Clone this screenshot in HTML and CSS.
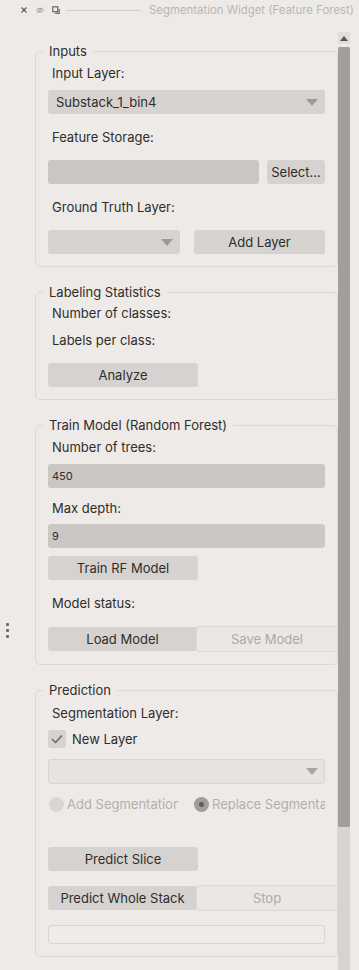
FILE: index.html
```html
<!DOCTYPE html>
<html lang="en">
<head>
    <meta charset="utf-8">
    <title>Segmentation Widget (Feature Forest)</title>
    <link rel="stylesheet" href="styles.css">
</head>
<body>
<div class="titlebar">
    <svg class="tb-icon" width="8" height="8" viewBox="0 0 8 8"><path d="M1.5 1.5 L6.5 6.5 M6.5 1.5 L1.5 6.5" stroke="#5a5856" stroke-width="1.1" fill="none"/></svg>
    <svg class="tb-icon" width="8" height="8" viewBox="0 0 8 8"><ellipse cx="4" cy="4.2" rx="3.2" ry="1.9" stroke="#a3a09d" stroke-width="1" fill="none"/><circle cx="4" cy="4.2" r="1" fill="#a3a09d"/><path d="M1.5 6.8 L6.5 1.6" stroke="#a3a09d" stroke-width="0.9"/></svg>
    <svg class="tb-icon" width="8" height="8" viewBox="0 0 8 8"><rect x="0.8" y="0.8" width="5" height="5" stroke="#5a5856" stroke-width="1.1" fill="none"/><path d="M3 7.2 H7.2 V3" stroke="#5a5856" stroke-width="1.1" fill="none"/></svg>
    <span class="tb-line"></span>
    <span class="tb-title">Segmentation Widget (Feature Forest)</span>
</div>

<div class="dock">
    <div class="gutter">
        <span class="handle"><i></i><i></i><i></i></span>
    </div>

    <div class="panel">
        <fieldset class="group first-group">
            <legend>Inputs</legend>
            <div class="body">
                <div class="lbl mt6">Input Layer:</div>
                <div class="combo mt9"><span>Substack_1_bin4</span><i class="arrow"></i></div>
                <div class="lbl mt15">Feature Storage:</div>
                <div class="row mt15 gap8">
                    <div class="edit grow"></div>
                    <button class="btn select">Select...</button>
                </div>
                <div class="lbl mt15">Ground Truth Layer:</div>
                <div class="row mt15 gap14">
                    <div class="combo gt-combo"><span></span><i class="arrow"></i></div>
                    <button class="btn grow">Add Layer</button>
                </div>
            </div>
        </fieldset>

        <fieldset class="group">
            <legend>Labeling Statistics</legend>
            <div class="body">
                <div class="lbl mt5">Number of classes:</div>
                <div class="lbl mt11">Labels per class:</div>
                <button class="btn half mt15">Analyze</button>
            </div>
        </fieldset>

        <fieldset class="group">
            <legend>Train Model (Random Forest)</legend>
            <div class="body">
                <div class="lbl mt6">Number of trees:</div>
                <div class="edit num mt9">450</div>
                <div class="lbl mt12">Max depth:</div>
                <div class="edit num mt8">9</div>
                <button class="btn half mt8">Train RF Model</button>
                <div class="lbl mt15">Model status:</div>
                <div class="row pair mt15">
                    <button class="btn left">Load Model</button>
                    <button class="btn off">Save Model</button>
                </div>
            </div>
        </fieldset>

        <fieldset class="group">
            <legend>Prediction</legend>
            <div class="body">
                <div class="lbl mt7">Segmentation Layer:</div>
                <div class="check mt9">
                    <span class="box"><svg width="18" height="18" viewBox="0 0 18 18"><path d="M4.5 9.5 L7.5 12.5 L13.5 6" stroke="#6b6866" stroke-width="1.6" fill="none" stroke-linecap="round" stroke-linejoin="round"/></svg></span>
                    <span>New Layer</span>
                </div>
                <div class="combo disabled mt11"><span></span><i class="arrow"></i></div>
                <div class="radios mt12">
                    <span class="radio first"><i class="dot"></i><span class="rtext">Add Segmentation</span></span>
                    <span class="radio on"><i class="dot"></i><span class="rtext">Replace Segmentation</span></span>
                </div>
                <button class="btn half mt35">Predict Slice</button>
                <div class="row pair mt14">
                    <button class="btn left">Predict Whole Stack</button>
                    <button class="btn off">Stop</button>
                </div>
                <div class="progress mt14"></div>
            </div>
        </fieldset>
    </div>

    <div class="scroll">
        <div class="sb-up"><i></i></div>
        <div class="sb-track"><div class="sb-thumb"></div></div>
    </div>
</div>
</body>
</html>
```

FILE: styles.css
```css
* {
    box-sizing: border-box;
}
body {
    margin: 0;
    width: 359px;
    height: 970px;
    overflow: hidden;
    background: #eeeae7;
    font-family: Inter, "Liberation Sans", sans-serif;
    font-size: 13px;
    color: #2f2d2c;
}

/* title bar */
.titlebar {
    display: flex;
    align-items: center;
    height: 20px;
    padding-left: 20px;
    overflow: hidden;
}
.tb-icon {
    display: block;
    flex: none;
    margin-right: 8px;
}
.tb-line {
    flex: none;
    width: 75px;
    height: 1px;
    margin-left: -2px;
    background: #d3cfcc;
}
.tb-title {
    flex: none;
    margin-left: 8px;
    font-size: 11.4px;
    color: #bab6b3;
    white-space: nowrap;
}

/* dock area */
.dock {
    display: flex;
    height: 950px;
}
.gutter {
    width: 35px;
    flex: none;
}
.handle {
    display: flex;
    flex-direction: column;
    gap: 3px;
    margin: 603px 0 0 6px;
}
.handle i {
    width: 3px;
    height: 3px;
    border-radius: 1px;
    background: #6e6b69;
}
.panel {
    width: 303px;
    flex: none;
    overflow: hidden;
}
.scroll {
    width: 12px;
    flex: none;
    display: flex;
    flex-direction: column;
}
.sb-up {
    height: 12px;
    margin-top: 12px;
    background: #e2dedb;
    display: flex;
    align-items: center;
    justify-content: center;
}
.sb-up i {
    width: 0;
    height: 0;
    border-left: 4px solid transparent;
    border-right: 4px solid transparent;
    border-bottom: 5px solid #595654;
}
.sb-track {
    flex: 1;
    margin-top: 3px;
    background: #d7d3d0;
}
.sb-thumb {
    height: 780px;
    border-radius: 2px;
    background: #a29e9b;
}

/* group boxes */
.group {
    margin: 17px 0 0;
    padding: 0 0 12px 7px;
    min-width: 0;
    border: 1px solid #dcd8d5;
    border-radius: 5px;
}
.first-group {
    margin-top: 23px;
}
legend {
    padding: 0 6px;
    line-height: 16px;
    color: #2f2d2c;
}
.body {
    padding: 0 12px 0 5px;
}
.lbl {
    height: 16px;
    line-height: 16px;
    padding-left: 4px;
}

.row {
    display: flex;
}
.gap8 { gap: 8px; }
.gap14 { gap: 14px; }
.grow { flex: 1 1 0; }

.combo {
    position: relative;
    height: 24px;
    line-height: 24px;
    padding-left: 8px;
    border-radius: 3px;
    background: #d6d2cf;
}
.gt-combo {
    width: 132px;
    flex: none;
}
.arrow {
    position: absolute;
    right: 7px;
    top: 9px;
    width: 0;
    height: 0;
    border-left: 6px solid transparent;
    border-right: 6px solid transparent;
    border-top: 7px solid #9e9a97;
}
.combo.disabled {
    height: 25px;
    background: #e7e3e0;
    border: 1px solid #d9d5d2;
}
.combo.disabled .arrow {
    top: 8px;
    right: 6px;
    border-top-color: #a9a5a2;
}

.edit {
    height: 24px;
    border-radius: 3px;
    background: #cbc7c4;
}
.edit.num {
    padding-left: 4px;
    line-height: 24px;
    font-size: 11px;
    color: #2f2d2c;
}

.btn {
    display: block;
    height: 24px;
    padding: 0;
    border: none;
    border-radius: 3px;
    background: #d6d2cf;
    font-family: inherit;
    font-size: 13px;
    color: #2f2d2c;
    text-align: center;
}
.select {
    width: 58px;
}
.half {
    width: 150px;
}

.pair {
    margin-right: -13px;
    align-items: center;
}
.pair .left {
    width: 149px;
    flex: none;
}
.btn.off {
    flex: 1;
    height: 26px;
    margin-left: -1px;
    border: 1px solid #dcd8d5;
    border-radius: 3px 0 0 3px;
    background: #ebe7e4;
    color: #aeaaa7;
}

.check {
    display: flex;
    align-items: center;
    gap: 6px;
    height: 18px;
}
.check .box {
    width: 18px;
    height: 18px;
    border-radius: 3px;
    background: #d6d2cf;
}
.check svg {
    display: block;
}

.radios {
    display: flex;
    height: 16px;
    align-items: center;
    color: #b3afac;
}
.radio {
    display: flex;
    align-items: center;
    gap: 3px;
    white-space: nowrap;
}
.radio.first {
    width: 146px;
    padding-left: 1px;
}
.radio .dot {
    width: 15px;
    height: 15px;
    flex: none;
    border-radius: 50%;
    background: #dad6d3;
}
.radio.on .dot {
    background: #a19d9a;
    position: relative;
}
.radio.on .dot::after {
    content: "";
    position: absolute;
    left: 5px;
    top: 5px;
    width: 5px;
    height: 5px;
    border-radius: 50%;
    background: #5f5c5a;
}
.rtext {
    overflow: hidden;
}
.radio.first .rtext {
    width: 111px;
}
.radio.on .rtext {
    width: 113px;
}

.progress {
    height: 19px;
    border: 1px solid #d9d5d2;
    border-radius: 3px;
    background: #efebe8;
}

.mt5 { margin-top: 5px; }
.mt6 { margin-top: 6px; }
.mt7 { margin-top: 7px; }
.mt8 { margin-top: 8px; }
.mt9 { margin-top: 9px; }
.mt11 { margin-top: 11px; }
.mt12 { margin-top: 12px; }
.mt14 { margin-top: 14px; }
.mt15 { margin-top: 15px; }
.mt35 { margin-top: 35px; }
```
